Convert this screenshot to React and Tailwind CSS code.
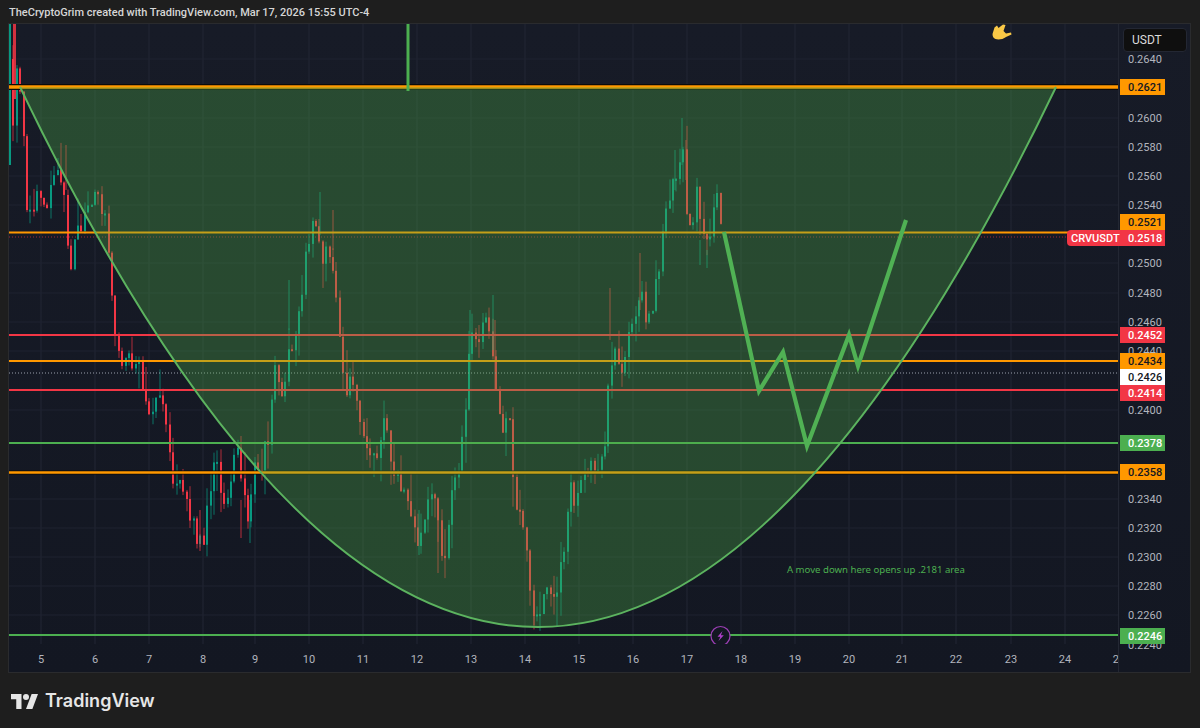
import React from "react";

const FONT = "font-['Roboto','Liberation_Sans',sans-serif]";

const priceTicks = [
  ["0.2640", 59],
  ["0.2600", 118],
  ["0.2580", 147],
  ["0.2560", 176],
  ["0.2540", 205],
  ["0.2500", 263],
  ["0.2480", 293],
  ["0.2460", 322],
  ["0.2440", 351],
  ["0.2400", 410],
  ["0.2340", 499],
  ["0.2320", 528],
  ["0.2300", 557],
  ["0.2280", 586],
  ["0.2260", 615],
  ["0.2240", 645],
];

const priceTags = [
  ["0.2621", 87, "bg-[#ff9800] text-[#131722]"],
  ["0.2521", 222, "bg-[#ff9800] text-[#131722]"],
  ["0.2518", 238, "bg-[#f23645] text-white"],
  ["0.2452", 335, "bg-[#f23645] text-white"],
  ["0.2434", 361, "bg-[#ff9800] text-[#131722]"],
  ["0.2426", 377, "bg-white text-[#131722]"],
  ["0.2414", 393, "bg-[#f23645] text-white"],
  ["0.2378", 443, "bg-[#4caf50] text-white"],
  ["0.2358", 472, "bg-[#ff9800] text-[#131722]"],
  ["0.2246", 636, "bg-[#4caf50] text-white"],
];

const days = [5, 6, 7, 8, 9, 10, 11, 12, 13, 14, 15, 16, 17, 18, 19, 20, 21, 22, 23, 24, 25];
const dayX = [41, 95, 149, 203, 255, 309, 363, 417, 471, 525, 579, 633, 687, 741, 795, 849, 902, 956, 1011, 1065, 1119];

const TEAL = "#089981";
const RED = "#f23645";

// rough path of the closes, read off the picture
const path = [
  [10, 70], [13, 130], [16, 60], [20, 100], [24, 150], [27, 200], [32, 215], [38, 195], [44, 215], [50, 190],
  [55, 175], [60, 165], [64, 200], [70, 265], [75, 240], [82, 225], [90, 205], [97, 200], [103, 215], [108, 235],
  [113, 300], [117, 350], [122, 370], [128, 360], [135, 358], [142, 380], [148, 405], [155, 405], [162, 405],
  [168, 425], [172, 470], [178, 485], [185, 505], [192, 520], [198, 540], [203, 540], [208, 510], [214, 455],
  [220, 480], [226, 500], [232, 465], [238, 445], [243, 500], [248, 515], [255, 470], [262, 465], [270, 430],
  [276, 360], [282, 395], [290, 350], [297, 320], [303, 290], [308, 240], [315, 225], [322, 260], [328, 235],
  [335, 290], [341, 360], [347, 395], [352, 365], [358, 420], [365, 440], [372, 460], [378, 450], [385, 420],
  [391, 465], [398, 480], [405, 490], [412, 530], [418, 540], [425, 510], [432, 490], [438, 505], [442, 560],
  [446, 545], [452, 480], [458, 470], [464, 430], [470, 340], [478, 350], [486, 320], [492, 340], [497, 390],
  [503, 425], [510, 430], [513, 480], [520, 520], [526, 545], [531, 590], [535, 615], [540, 610], [545, 590],
  [552, 600], [558, 580], [565, 555], [570, 490], [577, 500], [585, 480], [592, 465], [600, 475], [605, 440],
  [610, 360], [617, 345], [623, 375], [628, 345], [635, 310], [642, 300], [648, 320], [655, 290], [660, 260],
  [665, 220], [670, 200], [676, 170], [683, 155], [687, 230], [692, 240], [697, 190], [703, 225], [708, 250],
  [714, 215], [718, 195], [722, 235],
];

// the long wicks the generated candles don't reach
const wicks = [
  [682, 118, 165, TEAL], [675, 150, 190, TEAL], [686, 140, 180, RED], [320, 192, 235, TEAL], [333, 210, 250, RED],
  [438, 520, 573, RED], [419, 510, 555, TEAL], [610, 288, 340, RED], [640, 253, 310, RED], [470, 310, 370, TEAL],
  [493, 295, 350, TEAL], [495, 320, 390, RED], [707, 250, 268, TEAL], [700, 240, 265, TEAL], [289, 280, 330, TEAL],
  [200, 510, 551, RED], [241, 500, 538, RED], [250, 500, 543, TEAL], [66, 145, 190, RED], [534, 590, 625, RED],
];

const closeAt = (x) => {
  for (let i = 1; i < path.length; i++) {
    if (x <= path[i][0]) {
      const [x0, y0] = path[i - 1];
      const [x1, y1] = path[i];
      return y0 + ((y1 - y0) * (x - x0)) / (x1 - x0);
    }
  }
  return path[path.length - 1][1];
};

const makeCandles = () => {
  let seed = 17;
  const rnd = () => {
    seed = (seed * 16807) % 2147483647;
    return seed / 2147483647;
  };
  const out = [];
  let prev = path[0][1];
  for (let x = 10; x <= 722; x += 3.4) {
    const close = closeAt(x) + (rnd() - 0.5) * 22;
    const top = Math.min(prev, close);
    const bottom = Math.max(prev, close);
    out.push({
      x: Math.round(x),
      top,
      height: Math.max(bottom - top, 2),
      high: top - rnd() * rnd() * 32,
      low: bottom + rnd() * rnd() * 32,
      up: close < prev,
    });
    prev = close;
  }
  return out;
};

const candles = makeCandles();

const Candle = ({ c }) => {
  const color = c.up ? TEAL : RED;
  return (
    <g>
      <line x1={c.x} x2={c.x} y1={c.high} y2={c.low} stroke={color} strokeWidth="1" opacity="0.7" />
      <rect x={c.x - 1} y={c.top} width="2" height={c.height} fill={color} />
    </g>
  );
};

const Level = ({ y, color, width = 2 }) => (
  <line x1="9" x2="1118" y1={y} y2={y} stroke={color} strokeWidth={width} />
);

const Chart = () => (
  <svg viewBox="9 24 1109 620" className="block w-[1109px] h-[620px]">
    {dayX.map((x) => (
      <line key={x} x1={x} x2={x} y1="24" y2="644" stroke="#232734" strokeWidth="1" />
    ))}
    {priceTicks.map(([t, y]) => (
      <line key={t} x1="9" x2="1118" y1={y} y2={y} stroke="#1f2330" strokeWidth="1" />
    ))}

    <line x1="10" x2="10" y1="24" y2="165" stroke={TEAL} strokeWidth="2" />
    <rect x="13" y="24" width="3" height="75" fill={RED} opacity="0.85" />
    {candles.map((c, i) => (
      <Candle key={i} c={c} />
    ))}
    {wicks.map(([x, y1, y2, color]) => (
      <line key={x} x1={x} x2={x} y1={y1} y2={y2} stroke={color} strokeWidth="1" opacity="0.75" />
    ))}

    <line x1="9" x2="1118" y1="87" y2="87" stroke="#0b0b0b" strokeWidth="6" />
    <Level y={87} color="#ff9800" width={3.6} />
    <line x1="9" x2="1118" y1="237" y2="237" stroke={RED} strokeWidth="1" strokeDasharray="1 2" opacity="0.6" />
    <Level y={232.5} color="#ff9800" />
    <Level y={335} color={RED} />
    <Level y={361} color="#ff9800" />
    <line x1="9" x2="1118" y1="373" y2="373" stroke="#9aa0ac" strokeWidth="1" strokeDasharray="1 2" />
    <Level y={390} color={RED} />
    <Level y={443} color="#4caf50" />
    <line x1="9" x2="1118" y1="472.5" y2="472.5" stroke="#0b0b0b" strokeWidth="4" />
    <Level y={472.5} color="#ff9800" width={2.6} />
    <Level y={635} color="#4caf50" />

    <path d="M20 87 Q538 1167 1056 87 Z" fill="#4fae48" fillOpacity="0.33" stroke="none" />
    <path d="M20 87 Q538 1167 1056 87" fill="none" stroke="#5cb35f" strokeWidth="2" />

    <line x1="408" x2="408" y1="24" y2="91" stroke="#4caf50" strokeWidth="3" />
    <polyline
      points="724,232 759,391 783,352 807,446 849,335 858,366 906,220"
      fill="none"
      stroke="#50b154"
      strokeWidth="4.2"
    />

    <text x="787" y="572.500" fill="#4caf50" fontSize="9.6" className="font-['Noto_Sans',sans-serif]">
      A move down here opens up .2181 area
    </text>

    <circle cx="720.5" cy="636" r="9.5" fill="#131722" stroke="#9c3fb5" strokeWidth="1.2" />
    <path d="M722.5 631 L717.5 636.8 L720.4 636.8 L718.5 641 L723.8 635.2 L720.9 635.2 Z" fill="#b040cc" />

    {/* shaka hand */}
    <path
      d="M992.500 34 L994.500 27.500 L997 25.500 L998.500 28 L1001 26 L1003 24.500 L1005.500 25 L1003.500 31 L1006 33.500 L1011 32.500 L1011.500 34.500 L1006 37 C1003 39.500 998 40 995.500 39 C993.500 38.500 992.500 36.500 992.500 34 Z"
      fill="#f9c846"
    />
  </svg>
);

const Logo = () => (
  <svg viewBox="0 0 36 20" className="w-[27px] h-[15px]" fill="#e6e6e6">
    <path d="M14 20H7V7H0V0h14v20zM28.500 20H20L27.500 0H36L28.500 20z" />
    <circle cx="20" cy="4" r="4" />
  </svg>
);

const PriceAxis = () => (
  <div className="relative w-[72px] border-l border-[#232733] text-[11px] text-[#b2b5be]">
    {priceTicks.map(([t, y]) => (
      <span
        key={t}
        className="absolute left-[9px] h-4 leading-[18px]"
        style={{ top: y - 24 - 8 }}
      >
        {t}
      </span>
    ))}
    <div className="absolute left-[4px] top-[4px] w-16 h-6 rounded bg-[#0f0f0f] border border-[#232733] pl-2 text-[12px] leading-[23px] text-[#dbdbdb]">
      USDT
    </div>
    {priceTags.map(([t, y, color]) => (
      <span
        key={t}
        className={`absolute left-[1px] w-[45px] h-4 pl-[8px] leading-[17px] font-medium ${color}`}
        style={{ top: y - 24 - 8 }}
      >
        {t}
      </span>
    ))}
    <span className="absolute left-[-52px] top-[206px] w-[53px] h-4 rounded-l-sm bg-[#f23645] pl-1 leading-[17px] font-medium text-white">
      CRVUSDT
    </span>
  </div>
);

const TimeAxis = () => (
  <div className="relative h-[28px] overflow-hidden text-[11px] text-[#b2b5be]">
    {days.map((d, i) => (
      <span
        key={d}
        className="absolute top-[8px] w-6 -ml-3 text-center leading-4"
        style={{ left: dayX[i] - 9 }}
      >
        {d}
      </span>
    ))}
  </div>
);

export default function App() {
  return (
    <div className={`w-[1200px] h-[728px] overflow-hidden bg-[#1e1e1e] ${FONT}`}>
      <div className="h-[23px] pl-[9px] pt-[5px] text-[11px] leading-4 font-medium text-[#d6d6d6]">
        TheCryptoGrim created with TradingView.com, Mar 17, 2026 15:55 UTC-4
      </div>
      <div className="ml-2 flex w-[1183px] h-[650px] border border-[#2a2b2e] bg-gradient-to-b from-[#171b27] to-[#131722]">
        <div className="w-[1109px]">
          <Chart />
          <TimeAxis />
        </div>
        <PriceAxis />
      </div>
      <div className="flex items-center gap-[7px] pl-[11px] pt-4">
        <Logo />
        <span className="font-['Inter',sans-serif] text-[18px] leading-6 font-semibold text-[#e6e6e6]">TradingView</span>
      </div>
    </div>
  );
}
